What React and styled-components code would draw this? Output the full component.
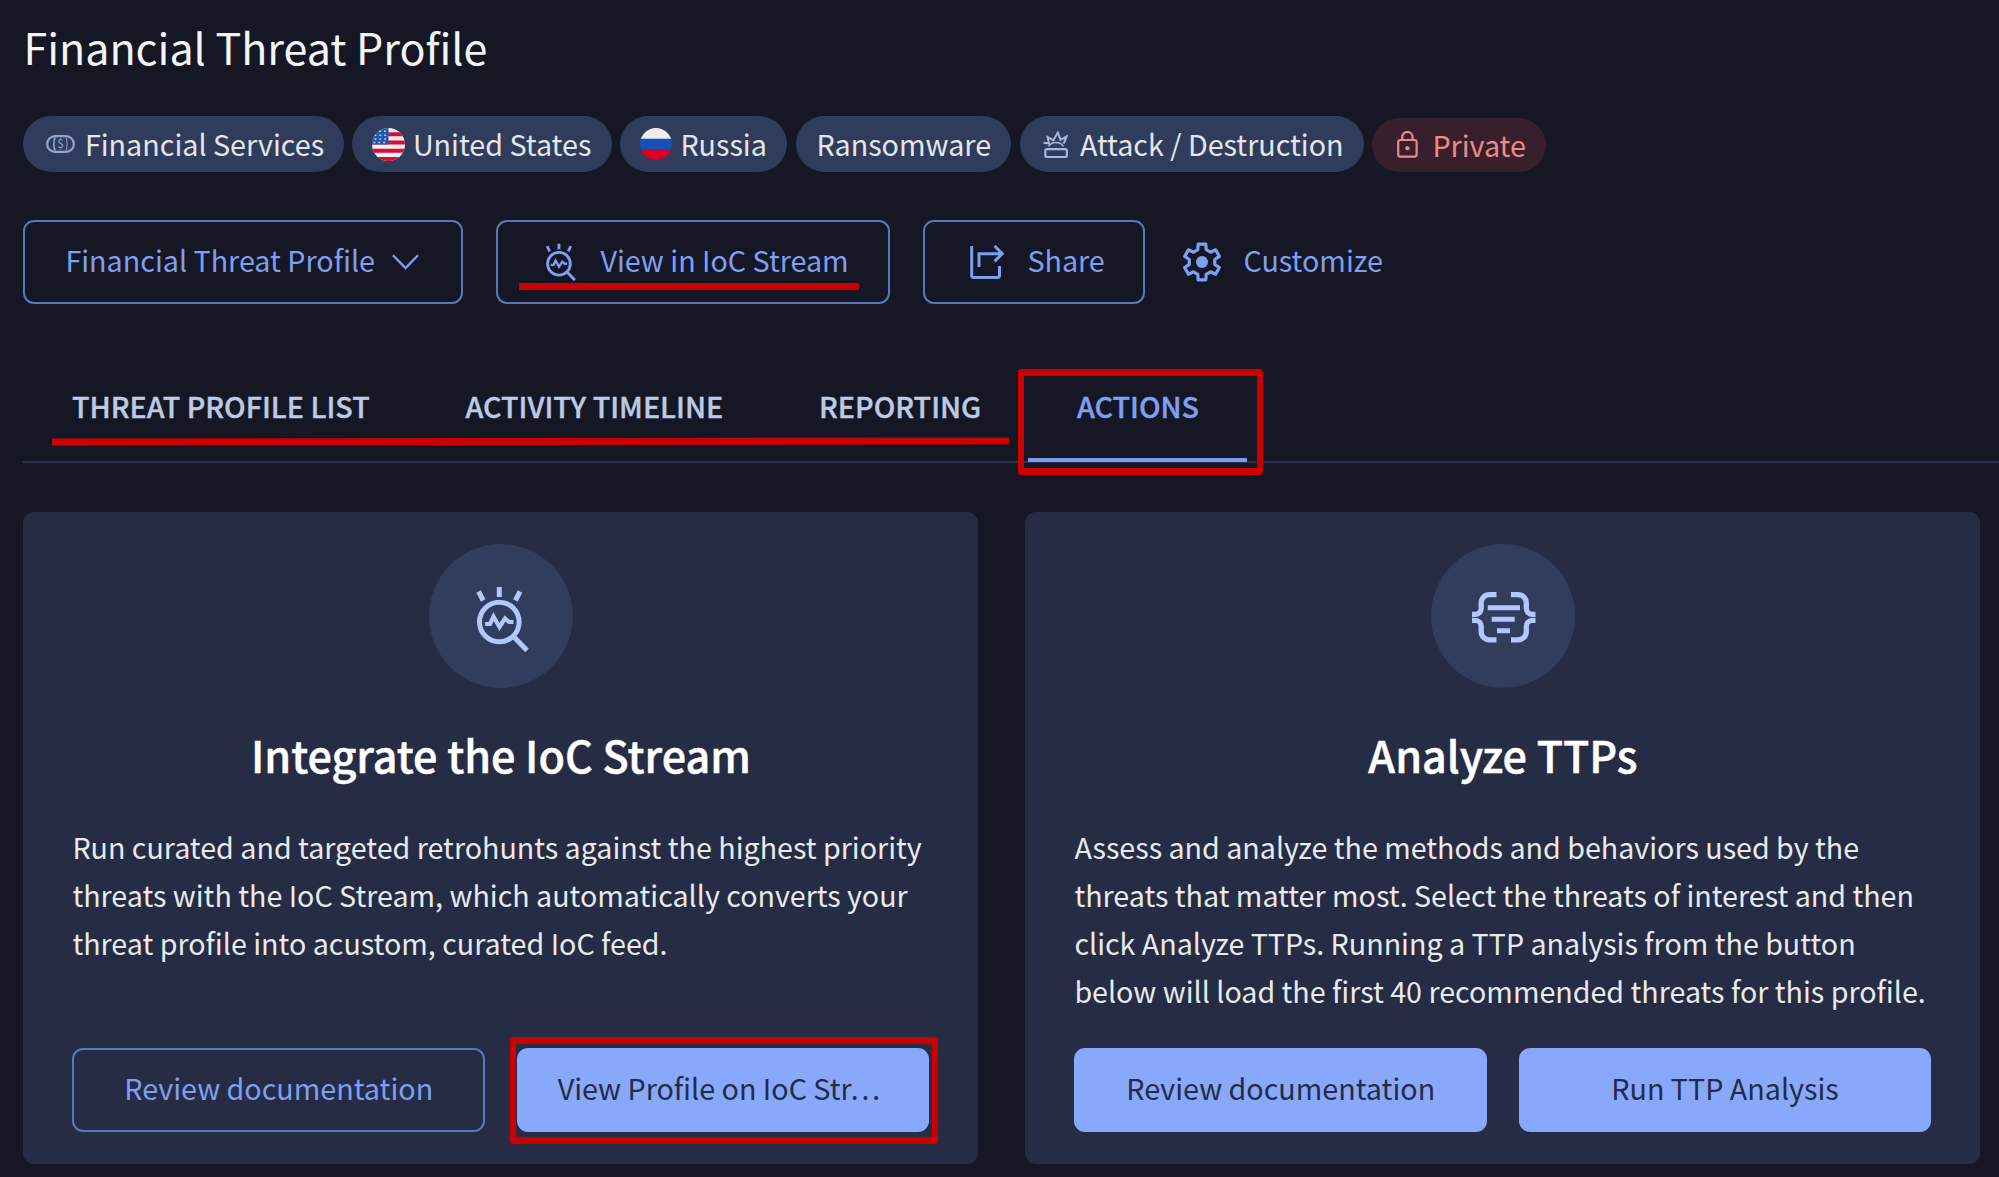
import React from 'react';
import styled, { createGlobalStyle } from 'styled-components';

const GlobalStyle = createGlobalStyle`
    * {
        box-sizing: border-box;
    }
    body {
        margin: 0;
        background: #151724;
        color: #e8eaed;
        font-family: 'Noto Sans CJK SC', 'Noto Sans', sans-serif;
        font-size: 28.7px;
        overflow: hidden;
    }
    svg {
        display: block;
        flex-shrink: 0;
    }
`

const Page = styled.main`
    height: 1177px;
    padding: 16px 0 0 23.4px;
`

const Title = styled.h1`
    margin: 0;
    height: 100px;
    font-size: 43px;
    font-weight: 400;
    line-height: 60px;
    color: #f3f4f6;
`

const ChipRow = styled.div`
    display: flex;
    align-items: flex-end;
    gap: 8.5px;
`

const Chip = styled.span`
    display: flex;
    align-items: center;
    width: ${props => props.$width}px;
    height: ${props => props.$private ? 54.5 : 56}px;
    padding-left: ${props => props.$pad || 20}px;
    gap: ${props => props.$gap || 8}px;
    border-radius: 28px;
    background: ${props => props.$private ? '#371f2b' : '#303c5b'};
    color: ${props => props.$private ? '#ee8a85' : '#e3e6ec'};
    line-height: 56px;
    white-space: nowrap;
`

const Toolbar = styled.div`
    display: flex;
    gap: 32.5px;
    margin-top: 48px;
    height: 84px;
`

const Button = styled.button`
    position: relative;
    display: flex;
    align-items: center;
    justify-content: ${props => props.$pad ? 'flex-start' : 'center'};
    gap: ${props => props.$gap || 0}px;
    width: ${props => props.$width ? `${props.$width}px` : 'auto'};
    height: 84px;
    padding: 0 0 0 ${props => props.$pad || 0}px;
    border: 2px solid ${props => props.$plain ? 'transparent' : '#5c77b9'};
    border-radius: 11px;
    background: transparent;
    color: #7f9ff0;
    font: inherit;
    white-space: nowrap;
`

const FilledButton = styled(Button)`
    border-color: #87a8fb;
    background: #87a8fb;
    color: #242c46;
`

const Label = styled.span`
    line-height: 40px;
    padding-bottom: 4px;
`

const Tabs = styled.nav`
    display: flex;
    position: relative;
    margin-top: 65px;
    height: 94px;
    border-bottom: 2px solid #2a314b;
`

const Tab = styled.a`
    position: relative;
    height: 93px;
    padding: 16.5px ${props => props.$active ? 48.4 : 47.2}px 0 48.6px;
    border-bottom: 4px solid ${props => props.$active ? '#7d9cee' : 'transparent'};
    color: ${props => props.$active ? '#7f9ff0' : '#bccae2'};
    font-weight: 500;
    line-height: 40px;
    white-space: nowrap;
    -webkit-text-stroke: 0.4px;
`

const Cards = styled.section`
    display: grid;
    grid-template-columns: 955px 955px;
    gap: 47px;
    margin-top: 48.5px;
`

const Card = styled.article`
    display: flex;
    flex-direction: column;
    align-items: center;
    height: 652.5px;
    padding: 32.5px 49px 0;
    border-radius: 11px;
    background: #252c44;
`

const IconCircle = styled.div`
    width: 144px;
    height: 144px;
    border-radius: 50%;
    background: #303d5c;
    color: #b2c8fb;
`

const CardTitle = styled.h2`
    margin: 34px 0 36.5px;
    font-size: 43.1px;
    font-weight: 500;
    line-height: 64px;
    color: #fff;
    -webkit-text-stroke: 0.5px;
`

const CardText = styled.p`
    align-self: stretch;
    height: 225.5px;
    margin: 0;
    font-size: 28.65px;
    line-height: 48px;
`

const CardActions = styled.div`
    display: grid;
    grid-template-columns: 1fr 1fr;
    gap: 31.5px;
    align-self: stretch;
`

// red marker annotations drawn over the controls
const Underline = styled.i`
    position: absolute;
    left: ${props => props.$left}px;
    top: ${props => props.$top}px;
    width: ${props => props.$width}px;
    height: 7px;
    background: #c00;
    transform: rotate(${props => props.$tilt || 0}deg);
`

const Outline = styled.i`
    position: absolute;
    inset: ${props => props.$inset};
    border: solid #c00;
    border-width: 7px 6px;
    border-radius: 3px;
`

const MoneyIcon = () => (
    <svg width="29" height="18" viewBox="0 0 29 18" fill="none" stroke="#93a5cd" strokeWidth="2.2">
        <rect x="1.2" y="1.2" width="26.6" height="15.6" rx="7.6" />
        <path d="M9 2.5C7.6 6 7.6 12 9 15.5" strokeWidth="1.8" />
        <path d="M20 2.5c1.4 3.5 1.4 9.500 0 13" strokeWidth="1" />
        <text x="14.5" y="13.4" textAnchor="middle" fontSize="12" fill="#93a5cd" stroke="none">$</text>
    </svg>
)

const UsFlag = () => (
    <svg width="33" height="33" viewBox="0 0 32 32">
        <clipPath id="us"><circle cx="16" cy="16" r="16" /></clipPath>
        <g clipPath="url(#us)">
            <path fill="#eee" d="M0 0h32v32H0z" />
            <path fill="#d80c38" d="M0 4h32v4H0zM0 12h32v4H0zM0 20h32v4H0zM0 28h32v4H0z" />
            <path fill="#2458ae" d="M0 0h16v16H0z" />
            <path stroke="#c4d2ea" strokeWidth="1.5" strokeDasharray="1.7 3" d="M7 3.2h8M2.5 7h13M2.5 10.6h13M1.5 14.1h14" />
        </g>
    </svg>
)

const RuFlag = () => (
    <svg width="32" height="32" viewBox="0 0 32 32">
        <clipPath id="ru"><circle cx="16" cy="16" r="16" /></clipPath>
        <g clipPath="url(#ru)">
            <path fill="#eee" d="M0 0h32v11H0z" />
            <path fill="#1550b4" d="M0 10.8h32v10.5H0z" />
            <path fill="#d80027" d="M0 21.2h32V32H0z" />
        </g>
    </svg>
)

const BlastIcon = () => (
    <svg width="25" height="27" viewBox="0 0 25 27" fill="none" stroke="#a5b8de" strokeWidth="2">
        <path d="M.5 11.8 6 12.6 4.6 6l5.7 3.4L14.8 1.5l2.7 7.3L23.6 5.4 20.6 12.6" />
        <path d="M5.500 15.5C7 12.8 9.5 11.6 13 11.6s6 1.2 7.3 3.9" strokeWidth="1.5" />
        <rect x="2.3" y="18.2" width="21.6" height="7.8" rx="1.8" strokeWidth="2.2" />
    </svg>
)

const LockIcon = () => (
    <svg width="21" height="27" viewBox="0 0 21 27" fill="none" stroke="#ee8a85" strokeWidth="2.2">
        <rect x="1.2" y="9" width="18.4" height="16.6" rx="2" />
        <path d="M5.2 9V6.2a5.2 5.2 0 0 1 10.4 0V9" />
        <circle cx="10.4" cy="17.2" r="2.1" fill="#ee8a85" stroke="none" />
    </svg>
)

const ChevronIcon = () => (
    <svg width="27" height="16" viewBox="0 0 27 16" fill="none" stroke="currentColor" strokeWidth="2.3">
        <path d="M1 1.2 13.5 14 26 1.2" />
    </svg>
)

const StreamIcon = ({ small }) => (
    <svg
        width={small ? 31 : 144}
        height={small ? 38 : 144}
        viewBox={small ? '46 42 54 66' : '0 0 144 144'}
        fill="none"
        stroke="currentColor"
        strokeWidth="5"
    >
        <circle cx="70.3" cy="78" r="19.8" />
        <path d="m49.6 47.5 4.6 9M70.3 43v10M91 47.5l-4.6 9M84 92l14 14.5" />
        <path d="M56 80h5l3.5-7.5 6 10.5 5.5-8.5 4 3.5h4.5" strokeWidth="4.2" />
    </svg>
)

const ShareIcon = () => (
    <svg width="34" height="34" viewBox="0 0 34 34" fill="none" stroke="currentColor" strokeWidth="3">
        <path d="M1.7 1v29.6q0 1.9 1.9 1.9h24q1.9 0 1.9-1.9V21" />
        <path d="M9 22V8.7h23M24.6 1l7.7 7.7-7.7 7.7" />
    </svg>
)

const gearPath = () => {
    const point = (r, deg) => {
        const a = (deg - 90) * Math.PI / 180
        return `${(20 + r * Math.cos(a)).toFixed(2)} ${(20 + r * Math.sin(a)).toFixed(2)}`
    }
    return [0, 60, 120, 180, 240, 300].map((a, i) => (
        `${i ? 'L' : 'M'}${point(13, a - 19)}L${point(18.2, a - 12)}L${point(18.2, a + 12)}L${point(13, a + 19)}`
    )).join('') + 'Z'
}

const GearIcon = () => (
    <svg width="40" height="40" viewBox="0 0 40 40" fill="none" stroke="currentColor" strokeWidth="3.2">
        <path d={gearPath()} strokeLinejoin="round" />
        <circle cx="20" cy="20" r="6" fill="currentColor" stroke="none" />
    </svg>
)

const BracesIcon = () => (
    <svg width="144" height="144" viewBox="0 0 144 144" fill="none" stroke="currentColor" strokeWidth="5.3">
        <path d="M65.5 50.7h-7.3a8 8 0 0 0-8 8v5.6a6 6 0 0 1-6 6H41M65.5 95.8h-7.3a8 8 0 0 1-8-8v-5.4a6 6 0 0 0-6-6H41" />
        <path d="M80 50.7h7.3a8 8 0 0 1 8 8v5.6a6 6 0 0 0 6 6h3.2M80 95.8h7.3a8 8 0 0 0 8-8v-5.4a6 6 0 0 1 6-6h3.2" />
        <path d="M56.7 63.7H89M60.7 75.3h23M66 86.7h13" strokeWidth="4.9" />
    </svg>
)

const App = () => {
    return (
        <Page>
            <GlobalStyle />
            <Title>Financial Threat Profile</Title>
            <ChipRow>
                <Chip $width={320.5} $pad={22.5} $gap={10}><MoneyIcon />Financial Services</Chip>
                <Chip $width={259.5} $pad={19.5}><UsFlag />United States</Chip>
                <Chip $width={167} $pad={19.5} $gap={8.5}><RuFlag />Russia</Chip>
                <Chip $width={215.5} $pad={20.5}>Ransomware</Chip>
                <Chip $width={344} $pad={23} $gap={12}><BlastIcon />Attack / Destruction</Chip>
                <Chip $width={174} $pad={25} $gap={14} $private><LockIcon />Private</Chip>
            </ChipRow>
            <Toolbar>
                <Button $width={440} $pad={40} $gap={17}>
                    <Label>Financial Threat Profile</Label>
                    <ChevronIcon />
                </Button>
                <Button $width={394.5} $pad={47.5} $gap={24}>
                    <StreamIcon small />
                    <Label>View in IoC Stream</Label>
                    <Underline $left={21} $top={61} $width={340} />
                </Button>
                <Button $width={222.5} $pad={45} $gap={23.5}>
                    <ShareIcon />
                    <Label>Share</Label>
                </Button>
                <Button $pad={2.5} $gap={21} $plain>
                    <GearIcon />
                    <Label>Customize</Label>
                </Button>
            </Toolbar>
            <Tabs>
                <Tab>THREAT PROFILE LIST</Tab>
                <Tab>ACTIVITY TIMELINE</Tab>
                <Tab>REPORTING</Tab>
                <Tab $active>
                    ACTIONS
                    <Outline $inset="0 -16px -17px -10px" />
                </Tab>
                <Underline $left={28.5} $top={69} $width={956.5} $tilt={-0.07} />
            </Tabs>
            <Cards>
                <Card>
                    <IconCircle><StreamIcon /></IconCircle>
                    <CardTitle>Integrate the IoC Stream</CardTitle>
                    <CardText>
                        Run curated and targeted retrohunts against the highest priority threats with the
                        IoC Stream, which automatically converts your threat profile into acustom, curated IoC feed.
                    </CardText>
                    <CardActions>
                        <Button><Label>Review documentation</Label></Button>
                        <FilledButton $pad={39}>
                            <Label>View Profile on IoC Str…</Label>
                            <Outline $inset="-13px -11px -14px -9px" />
                        </FilledButton>
                    </CardActions>
                </Card>
                <Card>
                    <IconCircle><BracesIcon /></IconCircle>
                    <CardTitle>Analyze TTPs</CardTitle>
                    <CardText>
                        Assess and analyze the methods and behaviors used by the threats that matter most.
                        Select the threats of interest and then click Analyze TTPs. Running a TTP analysis from
                        the button below will load the first 40 recommended threats for this profile.
                    </CardText>
                    <CardActions>
                        <FilledButton><Label>Review documentation</Label></FilledButton>
                        <FilledButton><Label>Run TTP Analysis</Label></FilledButton>
                    </CardActions>
                </Card>
            </Cards>
        </Page>
    )
}

export default App;
